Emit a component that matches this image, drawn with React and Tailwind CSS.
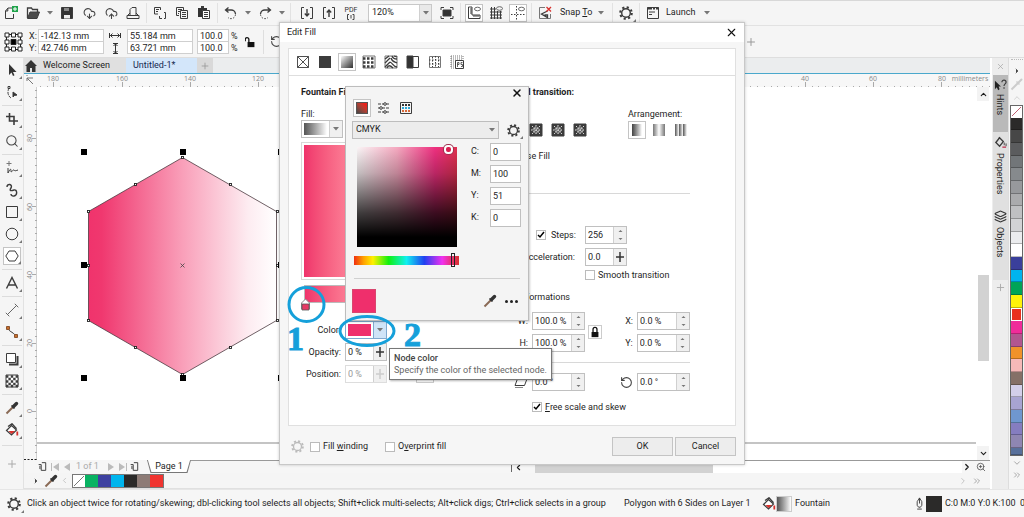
import React from 'react';
import {
  ChevronDown, ChevronLeft, ChevronRight, ChevronUp, ChevronsRight,
  CloudDownload, CloudUpload, Layers, Plus, RotateCcw, Search, X, ZoomIn,
} from 'lucide-react';
import clsx from 'clsx';

const PALETTE = [
  '#2b2a29', '#474747', '#5b5c5e', '#727679', '#868a8d', '#97999c', '#aaabad', '#bfc0c2',
  '#d2d3d5', '#ebecee', '#ffffff', '#3a3f9b', '#00b4ee', '#00a457', '#fff20a', '#e9301f',
  '#f02c9a', '#b2568f', '#f0922a', '#f6b9b8', '#857067', '#d3cfea', '#a8a4d2', '#6f97cf',
  '#857dc0', '#8f86b2', '#58709b',
];

const DOC_PALETTE = ['#08b262', '#3d41a0', '#00b5ee', '#2b2a29', '#8d7b76', '#f03430'];

const Svg = ({ size = 14, className, children }) => (
  <svg width={size} height={size} viewBox="0 0 14 14" fill="none" stroke="#3c3c3c" className={clsx('shrink-0', className)} aria-hidden="true">
    {children}
  </svg>
);

const Caret = ({ className }) => (
  <svg width="6" height="4" viewBox="0 0 6 4" className={clsx('shrink-0', className)} aria-hidden="true">
    <path d="M0 0h6L3 3.5z" fill="#777" />
  </svg>
);

const Gear = ({ size = 14, color = '#3a3a3a' }) => (
  <svg width={size} height={size} viewBox="0 0 14 14" fill="none" stroke={color} className="shrink-0" aria-hidden="true">
    <circle cx="7" cy="7" r="4.3" strokeWidth="1.4" />
    <circle cx="7" cy="7" r="5.8" strokeWidth="2" strokeDasharray="2.2 2.35" />
  </svg>
);

const FillBucket = () => (
  <Svg>
    <path d="M1.5 7.5 6.5 2.5l5 4.5-5 5z" fill="#fff" strokeWidth="1.2" />
    <path d="M3 3.5 7 .8l4.5 5" strokeWidth="1.4" />
    <path d="M3.5 8h6.5L6.5 11z" fill="#d8302c" stroke="none" />
    <path d="M12.3 8.5v4" stroke="#d8302c" strokeWidth="1.8" />
  </Svg>
);

const Dropper = ({ light }) => (
  <Svg>
    <path d="M1.5 12.5 8 6" stroke={light ? '#ccc' : '#8a6a55'} strokeWidth="2" />
    <path d="M6.5 4.5l3 3" stroke={light ? '#ccc' : '#333'} strokeWidth="1.5" />
    <path d="M8.5 5.5 11.5 2.5" stroke={light ? '#ccc' : '#333'} strokeWidth={light ? 2 : 3.4} strokeLinecap="round" />
  </Svg>
);

const Lock = ({ open }) => (
  <Svg size={12}>
    <path d="M3 7h8v6H3z" fill="#111" stroke="none" />
    <path d={open ? 'M4.5 7V3.5a2.2 2.2 0 0 0-4.2 0V6' : 'M4.7 7V4a2.3 2.3 0 0 1 4.6 0v3'} stroke="#111" strokeWidth="1.5" />
  </Svg>
);

const Origin = () => (
  <svg width="19" height="20" viewBox="0 0 19 20" fill="none" stroke="#222" className="shrink-0" aria-hidden="true">
    <path d="M2.5 2.5h14v15h-14z" />
    <path d="M1 1h4v4H1zM7.500 1h4v4h-4zM14 1h4v4h-4zM1 8h4v4H1zM14 8h4v4h-4zM1 15h4v4H1zM7.500 15h4v4h-4zM14 15h4v4h-4z" fill="#fff" />
    <path d="M7 7.500h5v5H7z" fill="#000" />
  </svg>
);

const Tool = ({ label, active, corner, children }) => (
  <button
    type="button"
    aria-label={label}
    className={clsx('relative flex h-[18px] w-[18px] shrink-0 items-center justify-center', active && 'border border-[#c4c4c4] bg-white')}
  >
    {children}
    {corner && (
      <svg width="3" height="3" viewBox="0 0 3 3" className="absolute -right-px bottom-0" aria-hidden="true">
        <path d="M3 0v3H0z" fill="#777" />
      </svg>
    )}
  </button>
);

const BarSlot = ({ children }) => <div className="flex w-[22px] shrink-0 justify-center">{children}</div>;
const BarCaret = () => (
  <button type="button" aria-label="More" className="flex w-3 shrink-0 justify-center"><Caret /></button>
);
const BarSep = () => <div className="mx-0.5 h-5 w-px shrink-0 bg-[#e2e2e2]" />;

const Toolbar = () => (
  <header className="flex h-[26px] items-center overflow-hidden border-y border-t-[#d8d8d8] border-b-[#e2e2e2] bg-[#f5f5f5]">
    <BarSlot>
      <Tool label="New">
        <Svg><path d="M8 2H4L1.500 5v7.500h8V8" /><path d="M3.800 2v3H1.500" /><path d="M8 0h6v6H8z" fill="#1fa34a" stroke="none" /><path d="M11 1v4M9 3h4" stroke="#fff" /></Svg>
      </Tool>
    </BarSlot>
    <BarSlot>
      <Tool label="Open">
        <Svg><path d="M1.500 12V2h4l1 1.500h5V6" strokeWidth="1.300" /><path d="M1.500 12.500 4 6h9.500l-2.500 6.500z" fill="#4a4a4a" /></Svg>
      </Tool>
    </BarSlot>
    <BarCaret />
    <BarSlot>
      <Tool label="Save">
        <Svg><path d="M1.500 1.500h11v11h-11z" fill="#333" /><path d="M4 9h6v3.500H4z" fill="#eee" stroke="none" /><path d="M4 2h5v3H4z" fill="#888" stroke="none" /></Svg>
      </Tool>
    </BarSlot>
    <BarSlot><Tool label="Open from cloud"><CloudDownload size={13} color="#444" /></Tool></BarSlot>
    <BarSlot><Tool label="Save to cloud"><CloudUpload size={13} color="#444" /></Tool></BarSlot>
    <BarSlot>
      <Tool label="Print">
        <Svg><path d="M1 9.500h12v3H1zM2 9l2-2M12 9l-2-2M4 9V3.500L6 1.500h4V9" /></Svg>
      </Tool>
    </BarSlot>
    <BarSep />
    <BarSlot><Tool label="Cut"><Svg><path d="M5 8H1.500V1.500h6V4M3 3.500h3M3 5.500h2M9 12.500H6.500V10M11 6.500h1.500v6H11" /></Svg></Tool></BarSlot>
    <BarSlot><Tool label="Copy"><Svg><path d="M4 9.500H1.500v-8h7V4M3 3.500h4M3 5.500h2M3 7.500h1" /><path d="M5.500 4.500h7v8h-7zM7 6.500h4M7 8.500h4M7 10.500h4" /></Svg></Tool></BarSlot>
    <BarSlot><Tool label="Paste"><Svg><path d="M1 2h9v9H1z" fill="#333" stroke="none" /><path d="M4 1h3" strokeWidth="2" /><path d="M5.500 4.500h7v8h-7zM7 6.500h4M7 8.500h4M7 10.500h4" fill="#fff" /></Svg></Tool></BarSlot>
    <BarSep />
    <BarSlot><Tool label="Undo"><Svg><path d="M4.500 1.500 1.500 4l3 2.500M2 4h5a4.300 4.300 0 0 1 4.500 4" strokeWidth="1.300" /><path d="M11.500 8.500A4.500 4.500 0 0 1 4 11.500" strokeDasharray="1.500 1.500" /></Svg></Tool></BarSlot>
    <BarCaret />
    <BarSlot><Tool label="Redo"><Svg><path d="M9.500 1.500l3 2.500-3 2.500M12 4H7a4.300 4.300 0 0 0-4.500 4" strokeWidth="1.300" /><path d="M2.500 8.500A4.500 4.500 0 0 0 10 11.500" strokeDasharray="1.500 1.500" /></Svg></Tool></BarSlot>
    <BarCaret />
    <BarSep />
    <div className="w-[3px]" />
    <BarSlot><Tool label="Import"><Svg><path d="M4 1.500H1.500v11H4M10 1.500h2.500v11H10" /><path d="M7 3v7M4.800 7.500 7 10l2.200-2.500" strokeWidth="1.400" /></Svg></Tool></BarSlot>
    <BarSlot><Tool label="Export"><Svg><path d="M4 1.500H1.500v11H4M10 1.500h2.500v11H10" /><path d="M7 11V4M4.800 6.500 7 4l2.200 2.500" strokeWidth="1.400" /></Svg></Tool></BarSlot>
    <BarSlot>
      <button type="button" className="flex flex-col items-center text-[7px] leading-[7px] text-[#333]">
        PDF
        <svg width="8" height="6" viewBox="0 0 8 6" fill="none" stroke="#444" aria-hidden="true"><path d="M2 .5H.5v5H2M5.500 .5H7v5H5.500M4 1v3.500" /></svg>
      </button>
    </BarSlot>
    <div className="relative ml-1.5 shrink-0">
      <select aria-label="Zoom level" defaultValue="120%" className="h-[18px] w-[64px] appearance-none border border-[#c8c8c8] bg-white pl-[3px]">
        <option>120%</option>
      </select>
      <span className="pointer-events-none absolute inset-y-px right-px flex w-3 items-center justify-center border-l border-[#d0d0d0] bg-[#e9e9e9]"><Caret /></span>
    </div>
    <div className="w-1" />
    <BarSlot><Tool label="Full screen preview"><Svg><path d="M3 4h8v6H3z" fill="#333" /><path d="M1 4V1.500h3M10 1.500h3V4M1 10v2.500h3M10 12.500h3V10" /></Svg></Tool></BarSlot>
    <BarSep />
    <BarSlot><Tool label="Show rulers" active><Svg><path d="M1.500 1v11.500H13V9H5V1zM3 3h2M3 5h2M3 7h2M7 11V9M9 11V9M11 11V9" /><ellipse cx="10.500" cy="3" rx="3" ry="1.800" stroke="#666" /></Svg></Tool></BarSlot>
    <BarSlot><Tool label="Show grid"><Svg><path d="M2.500 1v12M5.500 1v12M8.500 5v8M11.500 5v8M1 3h6M1 6h12M1 9h12M1 12h12" /><ellipse cx="10.500" cy="2.500" rx="3" ry="1.800" stroke="#666" /></Svg></Tool></BarSlot>
    <BarSlot><Tool label="Show guidelines" active><Svg><path d="M5.500 0v14M0 8.500h14" strokeDasharray="1.500 1.500" /><ellipse cx="10.500" cy="3" rx="3" ry="1.800" stroke="#666" /></Svg></Tool></BarSlot>
    <BarSep />
    <BarSlot><Tool label="Snap off"><Svg><path d="M7 1.500H1.500v11h11V8" stroke="#777" /><path d="M9.500 5 3.500 8l6 3.500V9H6.500" strokeWidth="1.300" /><path d="M8.500 1l4.500 4.500M13 1 8.500 5.500" stroke="#d8302c" strokeWidth="1.300" /></Svg></Tool></BarSlot>
    <button type="button" className="ml-1 flex w-11 shrink-0 items-center justify-between whitespace-nowrap">
      <span>Snap <u>T</u>o</span><Caret />
    </button>
    <div className="w-1.5" />
    <BarSep />
    <BarSlot><Tool label="Options" corner><Gear /></Tool></BarSlot>
    <BarSep />
    <BarSlot><Tool label="Launcher"><Svg><path d="M1.500 1.500h11v11h-11z" /><path d="M1 2.500h12" strokeWidth="2" strokeDasharray="5 1 2 1" /><path d="M3 6h6M3 8.500h3" /></Svg></Tool></BarSlot>
    <button type="button" className="ml-0.5 flex w-11 shrink-0 items-center justify-between"><span>Launch</span><Caret /></button>
  </header>
);

const StackedInputs = ({ labels, values, width }) => (
  <div className="flex shrink-0 flex-col">
    {values.map((value, i) => (
      <input key={labels[i]} aria-label={labels[i]} defaultValue={value} className={clsx('h-[13px] border border-[#cfcfcf] bg-white px-0.5 leading-[11px]', width, i > 0 && '-mt-px')} />
    ))}
  </div>
);

const PropertyBar = () => (
  <div className="flex h-8 items-center border-b border-[#dedede] bg-[#f5f5f5] pl-1">
    <Origin />
    <div className="mr-0.5 ml-1.5 flex w-[7px] flex-col leading-3"><span>X:</span><span>Y:</span></div>
    <StackedInputs labels={['X position', 'Y position']} values={['-142.13 mm', '42.746 mm']} width="w-[66px]" />
    <svg width="12" height="26" viewBox="0 0 12 26" fill="none" stroke="#333" className="mx-[5px] shrink-0" aria-hidden="true">
      <path d="M.5 4v5M11.500 4v5M1 6.500h10M3.500 4.500l-2 2 2 2M8.500 4.500l2 2-2 2M4 14.500h5M4 24.500h5M6.500 15v9M4.500 17l2-2 2 2M4.500 22l2 2 2-2" />
    </svg>
    <div className="ml-px"><StackedInputs labels={['Width', 'Height']} values={['55.184 mm', '63.721 mm']} width="w-[66px]" /></div>
    <div className="mr-0.5 ml-1"><StackedInputs labels={['Scale X', 'Scale Y']} values={['100.0', '100.0']} width="w-8" /></div>
    <div className="flex w-2 flex-col leading-3"><span>%</span><span>%</span></div>
    <button type="button" aria-label="Lock ratio" className="mx-1.5"><Lock open /></button>
    <div className="mr-1.5 h-6 w-px bg-[#dedede]" />
    <RotateCcw size={13} color="#444" />
    <button type="button" aria-label="Add control" className="ml-[462px]"><Plus size={12} color="#999" /></button>
  </div>
);

const Toolbox = () => {
  const groups = [
    [
      ['Pick', <Svg><path d="M4 1v11l2.500-2.500L8 13l1.500-.8L8 9h3.500z" fill="#333" stroke="none" /></Svg>],
      ['Shape', <Svg><path d="M4 3C2 7 3 11 6 13" strokeDasharray="3 1" /><path d="M3 1.500h2v2H3z" /><path d="M8 7v5l1.500-1.500L12 10z" fill="#333" /></Svg>],
    ],
    [
      ['Crop', <Svg><path d="M4.500 1v8h8.500M1 4.500h8V13" strokeWidth="1.600" /></Svg>],
      ['Zoom', <Search size={14} strokeWidth={1.8} color="#444" />],
    ],
    [
      ['Freehand', <Svg><path d="M4 0v5M1.500 2.500h5" stroke="#777" /><path d="M3 7v5c2-4 3-5 3-2s2-2 3-1 1 1 4 0" /></Svg>],
      ['Artistic media', <Svg><path d="M2 4c0-4 6-3 4 1-2 3 0 3 3 2s4 5 0 6c-2 .5-3-1-3-2" strokeWidth="1.400" /></Svg>],
      ['Rectangle', <Svg><path d="M1.500 1.500h11v11h-11z" /></Svg>],
      ['Ellipse', <Svg><circle cx="7" cy="7" r="5.800" /></Svg>],
      ['Polygon', <Svg><path d="M4 2h6l3.200 5L10 12H4L.8 7z" /></Svg>, true],
    ],
    [['Text', <Svg><path d="M1.500 12.500 7 1.500l5.500 11M3.500 9h7" strokeWidth="1.400" /></Svg>]],
    [
      ['Dimension', <Svg><path d="M2.500 11.500l9-9M.8 9.800l3.500 3.500M9.800 .8l3.500 3.500" stroke="#666" /></Svg>],
      ['Connector', <Svg><path d="M3 3c1 4 4 3 8 8" /><path d="M1.500 1.500h3v3h-3zM9.500 9.500h3v3h-3z" fill="#c9702d" stroke="#8a5430" /></Svg>],
    ],
    [
      ['Drop shadow', <Svg><path d="M4 12.500h8.500V4" strokeWidth="2" /><path d="M1.500 1.500h9v9h-9z" fill="#fff" /></Svg>],
      ['Transparency', <Svg><path d="M1 1h12v12H1z" fill="#fff" /><path d="M1 2.500h12M1 7.500h12M1 12h12" strokeWidth="2.400" strokeDasharray="2.400 2.400" /><path d="M3.400 5h10M3.400 10h10" strokeWidth="2.400" strokeDasharray="2.400 2.400" /></Svg>],
    ],
    [['Color eyedropper', <Dropper />], ['Interactive fill', <FillBucket />]],
  ];
  return (
    <aside className="flex w-6 shrink-0 flex-col items-center border-r border-[#e2e2e2] bg-[#f5f5f5] pt-px">
      {groups.map((group, i) => (
        <div key={i} className={clsx('flex w-5 flex-col items-center', i > 0 && 'mt-0.5 border-t border-[#dcdcdc] pt-0.5')}>
          {group.map(([label, icon, active]) => (
            <div key={label} className="flex h-[22px] items-center">
              <Tool label={label} active={active} corner>{icon}</Tool>
            </div>
          ))}
        </div>
      ))}
      <div className="mt-1 flex w-5 justify-center border-t border-[#dcdcdc] pt-3"><Plus size={12} color="#aaa" /></div>
    </aside>
  );
};

const ticks = (count, start, step) => Array.from({ length: count }, (_, i) => start + i * step);

const TopRuler = () => (
  <div className="flex h-[13px] overflow-hidden bg-[#f7f7f7]">
    <svg width="966" height="13" viewBox="0 0 966 13" fill="none" stroke="#aaa" className="shrink-0" aria-hidden="true">
      <path d="M9 10 3 4M3 7V4h3M3 1v1M6 4h3" stroke="#777" />
      {ticks(142, 15.800, 6.830).map((x, i) => <path key={i} d={`M${Math.round(x) + 0.5} ${i % 10 === 2 ? 8 : 12}v5`} />)}
      <g fill="#8a8a8a" stroke="none" fontSize="7" textAnchor="middle" fontFamily="Open Sans, sans-serif">
        {[[180, 29], [160, 98], [140, 166], [120, 234], [40, 781], [60, 849], [80, 918]].map(([n, x]) => (
          <text key={n} x={x} y="7">{n}</text>
        ))}
        <text x="946" y="7">millimeters</text>
      </g>
    </svg>
  </div>
);

const SideRuler = () => (
  <svg width="13" height="373" viewBox="0 0 13 373" fill="none" stroke="#aaa" className="shrink-0 bg-[#f7f7f7]" aria-hidden="true">
    <path d="M12.500 0v373" stroke="#d0d0d0" />
    {ticks(55, 3, 6.830).map((y, i) => <path key={i} d={`M${i % 10 === 7 ? 8 : 11} ${Math.round(y) + 0.5}h4`} />)}
    <g fill="#8a8a8a" stroke="none" fontSize="7" textAnchor="middle" fontFamily="Open Sans, sans-serif">
      {[[80, 51], [60, 120], [40, 188], [20, 256], [0, 324]].map(([n, y]) => (
        <text key={n} transform={`translate(8 ${y}) rotate(-90)`}>{n}</text>
      ))}
    </g>
    <path d="M0 372.500h13" stroke="#222" strokeDasharray="2 1.500" />
  </svg>
);

const Hexagon = () => {
  const nodes = [[145, 70], [98, 97], [51, 124], [51, 178], [51, 233], [98, 260], [145, 287], [193, 260], [240, 233], [240, 178], [240, 124], [193, 97]];
  const handles = [[46, 65], [145, 65], [243, 65], [46, 178], [243, 178], [46, 291], [145, 291], [243, 291]];
  return (
    <svg width="260" height="373" viewBox="0 0 260 373" className="shrink-0" role="img" aria-label="Polygon with 6 sides">
      <defs>
        <linearGradient id="pink">
          <stop offset="0" stopColor="#f0336c" />
          <stop offset="0.070" stopColor="#f0386f" />
          <stop offset="0.500" stopColor="#f99fb9" />
          <stop offset="0.850" stopColor="#fdecf1" />
          <stop offset="1" stopColor="#ffffff" />
        </linearGradient>
      </defs>
      <path d="M145.500 70.500 239.500 124.500V233.500L145.500 287.500 51.500 233.500V124.500z" fill="url(#pink)" stroke="#4b3a40" strokeWidth="0.800" />
      {nodes.map(([x, y]) => <rect key={`${x}-${y}`} x={x - 0.5} y={y - 0.5} width="2" height="2" fill="#fff" stroke="#222" strokeWidth="0.900" />)}
      {handles.map(([x, y]) => <rect key={`h${x}-${y}`} x={x - 2} y={y - 3} width="6" height="6" fill="#000" />)}
      <path d="M143.500 176.500l4 4M147.500 176.500l-4 4" stroke="#444" strokeWidth="0.800" />
    </svg>
  );
};

const Workspace = () => (
  <section className="flex min-w-0 flex-1 flex-col">
    <nav className="flex h-4 items-stretch border-b border-[#4aa8cc] bg-[#ebedee]">
      <a href="#welcome" className="flex w-[102px] items-center gap-1.5 bg-[#e0e0e0] pl-px text-[#222]">
        <svg width="12" height="12" viewBox="0 0 12 12" aria-hidden="true"><path d="M6 0 0 6h1.500v6H5V8h2v4h3.500V6H12z" fill="#333" /></svg>
        Welcome Screen
      </a>
      <a href="#untitled" className="flex w-[71px] items-center bg-[#d3e6fa] pl-[7px] text-[#15294f]">Untitled-1*</a>
      <button type="button" aria-label="New tab" className="flex w-4 items-center justify-center bg-[#d9d9d9]"><Plus size={10} color="#999" /></button>
    </nav>
    <TopRuler />
    <div className="flex flex-1">
      <SideRuler />
      <div className="relative min-w-0 flex-1 overflow-hidden bg-white">
        <Hexagon />
        <div className="absolute bottom-4 left-0 h-0.5 w-full bg-[#c4c4c4]" />
      </div>
      <div className="flex w-3.5 flex-col items-center bg-white">
        <button type="button" aria-label="Scroll up" className="flex h-3.5 w-3 items-center justify-center bg-[#f3f3f3]"><ChevronUp size={9} strokeWidth={3} /></button>
        <div className="mt-[174px] h-[86px] w-[11px] bg-[#d2d2d2]" />
        <button type="button" aria-label="Scroll down" className="mt-auto flex h-3.5 w-3 items-center justify-center bg-[#f3f3f3]"><ChevronDown size={9} strokeWidth={3} /></button>
      </div>
    </div>
    <div className="flex h-[13px] items-center bg-[#f6f6f6] pl-3.5">
      <Svg size={9}><path d="M1 4h4v9h7V1H6M3 6v5" strokeWidth="1.500" /></Svg>
      <svg width="25" height="8" viewBox="0 0 25 8" fill="#bbb" className="ml-1 shrink-0" aria-hidden="true"><path d="M0 0h1v8H0zM8 0v8L2 4zM19 0v8l-6-4z" /></svg>
      <span className="w-7 shrink-0 text-[#aaa]">1 of 1</span>
      <svg width="20" height="8" viewBox="0 0 20 8" fill="#bbb" className="ml-1 shrink-0" aria-hidden="true"><path d="M0 0v8l6-4zM11 0v8l6-4zM18 0h1v8h-1z" /></svg>
      <Svg size={9} className="ml-0.5"><path d="M1 4h4v9h7V1H6M3 6v5" strokeWidth="1.500" /></Svg>
      <div className="ml-2 h-[13px] w-11 shrink-0 bg-[#777] [clip-path:polygon(0_0,100%_0,92%_100%,8%_100%)]">
        <button type="button" className="block h-3 w-11 bg-white leading-3 [clip-path:polygon(2%_0,98%_0,90%_100%,10%_100%)]">Page 1</button>
      </div>
      <div className="flex min-w-0 flex-1 items-center self-stretch border-t border-[#999]">
        <div className="ml-[320px] h-2.5 w-px bg-[#666]" />
        <ChevronLeft size={9} strokeWidth={3} className="ml-0.5 shrink-0" />
        <div className="ml-3 h-3 w-[178px] shrink-0 bg-[#d2d2d2]" />
        <div className="h-3 min-w-0 flex-1 bg-white" />
        <ChevronRight size={10} strokeWidth={3} className="shrink-0" />
        <ZoomIn size={10} className="mr-1 ml-1 shrink-0" color="#555" />
      </div>
    </div>
    <div className="flex h-4 items-center border-b border-[#e0e0e0] bg-[#f5f5f5] pl-2">
      <ChevronRight size={8} fill="#444" color="#444" />
      <div className="ml-1"><Dropper /></div>
      <ChevronLeft size={9} color="#bbb" className="ml-0.5" />
      <div className="ml-[3px] flex border border-[#777] bg-white">
        <svg width="12" height="12" viewBox="0 0 12 12" stroke="#777" aria-hidden="true"><path d="M1 11 11 1" /></svg>
        {DOC_PALETTE.map((color) => (
          <button key={color} type="button" aria-label={color} className="h-3 w-[13px]" style={{ backgroundColor: color }} />
        ))}
      </div>
      <ChevronRight size={10} color="#bbb" className="ml-auto" />
      <ChevronsRight size={10} color="#999" className="mr-2 ml-1" />
    </div>
  </section>
);

const DockTab = ({ active, icon, children }) => (
  <button type="button" className={clsx('flex w-[15px] flex-col items-center px-px pt-1', active ? 'h-[57px] gap-0.5 bg-[#b9b9b9]' : 'h-[74px] gap-1 bg-[#e0e0e0]')}>
    {icon}
    <span className="leading-3 [writing-mode:vertical-rl]">{children}</span>
  </button>
);

const Dockers = () => (
  <aside className="ml-0.5 flex w-[17px] shrink-0 flex-col items-center border-r border-[#ddd] bg-[#ededed]">
    <button type="button" aria-label="Close docker" className="flex h-[17px] items-center"><X size={9} color="#aaa" /></button>
    <DockTab active icon={<Svg size={13}><path d="M1 2v9l2-2 1.500 3L6 11 5 8h2.500z" fill="#222" stroke="none" /><path d="M8.500 3.500c0-3 4.500-3 4.500 0 0 2-2.200 1.500-2.200 4M10.800 9v1.500" strokeWidth="1.300" /></Svg>}>Hints</DockTab>
    <DockTab icon={<Svg size={13}><path d="M2 7 6 2l4 4-4 5z" strokeWidth="1.500" /><path d="M9 12h4" stroke="#c0405a" strokeWidth="1.500" /><path d="M5 3l1-2M11 7v3M13 8v3" /></Svg>}>Properties</DockTab>
    <DockTab icon={<Layers size={13} color="#333" />}>Objects</DockTab>
    <Plus size={11} color="#aaa" className="mt-0.5" />
  </aside>
);

const ColorStrip = () => (
  <aside className="flex w-[15px] shrink-0 flex-col items-center bg-[#f5f5f5]">
    <div className="mt-px w-3 border-t border-dotted border-[#bbb]" />
    <ChevronRight size={8} fill="#444" color="#444" className="mt-[7px]" />
    <div className="mt-0.5"><Dropper light /></div>
    <ChevronUp size={10} color="#ccc" className="mt-0.5" />
    <div className="mt-0.5 flex h-[351px] w-[13px] flex-col border border-[#666]">
      <div className="flex flex-2 bg-white">
        <svg viewBox="0 0 11 11" width="11" height="11" stroke="#c06070" aria-hidden="true"><path d="M1 10 10 1" /></svg>
      </div>
      {PALETTE.map((color, i) => (
        <button
          key={color}
          type="button"
          aria-label={color}
          className={clsx(i === PALETTE.length - 1 ? 'flex-1' : 'flex-2', i === 15 ? 'border border-white' : 'border-b border-black/25')}
          style={{ backgroundColor: color }}
        />
      ))}
    </div>
    <ChevronDown size={10} color="#999" className="mt-0.5" />
    <ChevronsRight size={10} color="#999" className="mt-0.5" />
  </aside>
);

const StatusBar = () => (
  <footer className="flex h-7 items-center overflow-hidden border-t border-[#e6e6e6] bg-[#f6f6f6] pl-[5px] whitespace-nowrap">
    <Tool label="Status bar options" corner><Gear /></Tool>
    <p className="ml-1 w-[597px] shrink-0">
      Click an object twice for rotating/skewing; dbl-clicking tool selects all objects; Shift+click multi-selects; Alt+click digs; Ctrl+click selects in a group
    </p>
    <p className="w-[138px] shrink-0">Polygon with 6 Sides on Layer 1</p>
    <FillBucket />
    <div className="h-4 w-4 shrink-0 border border-[#ccc] bg-linear-to-r from-[#555] to-white" />
    <p className="ml-[3px]">Fountain</p>
    <Svg size={13} className="ml-auto"><path d="M7 1 4.500 5v4l1.500 2h2l1.500-2V5zM7 1v6M4.500 13h5" /></Svg>
    <div className="h-4 w-4 shrink-0 bg-[#2b2a29]" />
    <p className="ml-[3px] w-[79px] shrink-0 whitespace-pre">C:0 M:0 Y:0 K:100  0</p>
  </footer>
);

const Spin = ({ label, value, width = 'w-[53px]', slider, disabled }) => (
  <div className={clsx('flex h-[18px] shrink-0 border', width, disabled ? 'border-[#ddd]' : 'border-[#c0c0c0]')}>
    <input aria-label={label} defaultValue={value} disabled={disabled} className="w-0 min-w-0 flex-1 bg-white pl-0.5 disabled:text-[#999]" />
    <button type="button" disabled={disabled} aria-label={`Change ${label}`} className="flex w-[13px] items-center justify-center border-l border-[#d0d0d0] bg-[#f0f0f0]">
      {slider ? (
        <svg width="10" height="12" viewBox="0 0 10 12" stroke={disabled ? '#ccc' : '#333'} aria-hidden="true"><path d="M5 1v10M1 6h8" strokeWidth="1.500" /></svg>
      ) : (
        <svg width="5" height="12" viewBox="0 0 5 12" fill="#777" aria-hidden="true"><path d="M.5 3h4l-2-2zM.5 9h4l-2 2z" /></svg>
      )}
    </button>
  </div>
);

const Check = ({ checked, children }) => (
  <label className="flex items-center gap-[3px] whitespace-nowrap">
    <input
      type="checkbox"
      defaultChecked={checked}
      className="h-2.5 w-2.5 shrink-0 appearance-none border border-[#bbb] bg-white checked:bg-[url('data:image/svg+xml,%3Csvg%20xmlns=%22http://www.w3.org/2000/svg%22%20viewBox=%220%200%208%208%22%3E%3Cpath%20d=%22M1%204l2%202%204-5%22%20fill=%22none%22%20stroke=%22black%22%20stroke-width=%221.500%22/%3E%3C/svg%3E')]"
    />
    <span>{children}</span>
  </label>
);

const Pattern = ({ kind }) => {
  const paths = {
    none: <path d="M1.500 1.500h11v11h-11zM1.500 1.500l11 11M12.500 1.500l-11 11" strokeWidth="0.900" />,
    solid: <path d="M1 1h12v12H1z" fill="#3c3c3c" stroke="none" />,
    vector: <><path d="M1 1h12v12H1z" stroke="#777" /><path d="M1 3.500h12M1 7.500h12M1 11.500h12" strokeWidth="2.500" strokeDasharray="2.500 1.500" /></>,
    bitmap: <><path d="M1 1h12v12H1z" stroke="#777" /><path d="M1 4l4-3M1 8l5-5M1 12l5-5M8 1c1 3 3 3 5 3M7 3c1 4 4 4 6 5M6 7c3 1 3 5 7 5M3 13c1-3 3-3 6 0M10 1l3 1" strokeWidth="1.300" /></>,
    two: <><path d="M1.500 1.500h11v11h-11z" /><path d="M1 1h6v12H1z" fill="#333" /></>,
    texture: <><path d="M1.500 1.500h11v11h-11z" stroke="#777" /><path d="M4.500 2v10M7.500 1v12M10.500 2v10M1 5h12M1 9h12" strokeDasharray="1.500 1.500" /></>,
    postscript: <><path d="M1 1h12v4M1 1v12h4M1 3h12M1 5h11M1 7h4M1 9h4M1 11h4" stroke="#777" strokeDasharray="1 1" /><path d="M5.500 5.500h8v8h-8z" fill="#fff" /><path d="M7.500 12V7.500h1.500v2H7.500M12.500 7.500H11v2h1.500v2H11" strokeWidth="0.800" /></>,
    tile: <><path d="M1 1h12v12H1z" fill="#3c3c3c" /><path d="M3 3l8 8M11 3l-8 8M7 2v10M2 7h10" stroke="#ddd" strokeDasharray="1.500 1" /><circle cx="7" cy="7" r="3" stroke="#bbb" strokeDasharray="2 1" /></>,
  };
  return <Svg>{paths[kind]}</Svg>;
};

const CornerInput = ({ label, value }) => (
  <label className="flex items-center justify-between">
    {label}:
    <input defaultValue={value} className="h-[18px] w-[31px] border border-[#c0c0c0] bg-white pl-0.5" />
  </label>
);

const ColorPicker = () => (
  <div className="absolute top-[63px] left-[65px] flex w-[184px] flex-col border border-[#bdbdbd] bg-[#f4f4f4] px-1.5 pb-[7px] shadow-[1px_1px_2px_rgba(0,0,0,0.2)]">
    <button type="button" aria-label="Close picker" className="-mr-px flex h-3 w-3 items-center self-end"><X size={12} strokeWidth={3} color="#111" /></button>
    <div className="flex gap-1 pl-px">
      <Tool label="Visual selector" active><div className="h-3 w-3 border border-[#555] bg-linear-to-bl from-[#e8231c] from-20% to-[#444]" /></Tool>
      <Tool label="Sliders"><Svg><path d="M1 3h12M1 7h12M1 11h12" strokeDasharray="3 1" /><circle cx="8" cy="3" r="1.300" fill="#fff" /><circle cx="4" cy="7" r="1.300" fill="#fff" /><circle cx="8" cy="11" r="1.300" fill="#fff" /></Svg></Tool>
      <Tool label="Palettes">
        <Svg>
          <path d="M1.500 1.500h11v11h-11z" />
          <path d="M3 4h8" stroke="#333" strokeWidth="2" strokeDasharray="2 1" />
          <path d="M3 7h8" stroke="#29a7d8" strokeWidth="2" strokeDasharray="2 1" />
          <path d="M3 10h8" stroke="#d86a3a" strokeWidth="2" strokeDasharray="2 1" />
        </Svg>
      </Tool>
    </div>
    <div className="mt-1 flex items-center justify-between">
      <div className="relative">
        <select aria-label="Color model" defaultValue="CMYK" className="h-[18px] w-[147px] appearance-none border border-[#bdbdbd] bg-[#ececec] pl-[3px]">
          <option>CMYK</option>
        </select>
        <Caret className="pointer-events-none absolute top-[7px] right-1" />
      </div>
      <Tool label="Picker options" corner><Gear size={13} /></Tool>
    </div>
    <div className="mt-1 flex justify-between">
      <div className="relative mt-1 ml-[5px] h-[100px] w-[100px] bg-[linear-gradient(to_top,#000_10%,rgba(0,0,0,0.75)_34%,rgba(0,0,0,0.22)_74%,transparent),linear-gradient(to_right,#faf5f6,#f5a9c0_40%,#ee3080_78%,#e0304f)]">
        <span className="absolute -top-0.5 right-1 flex h-[9px] w-[9px] items-center justify-center rounded-sm border-2 border-white bg-[#d8204f] ring-1 ring-[#a03050]" />
      </div>
      <div className="mr-px flex w-[50px] flex-col gap-1">
        <CornerInput label="C" value="0" />
        <CornerInput label="M" value="100" />
        <CornerInput label="Y" value="51" />
        <CornerInput label="K" value="0" />
      </div>
    </div>
    <div className="relative mt-[9px] ml-0.5 h-[9px] w-[105px] bg-[linear-gradient(to_right,#f03010,#ffa000_9%,#fff000_18%,#10f010_33%,#10f0f0_50%,#2040f0_67%,#f030f0_84%,#e83070_93%,#d83030)]">
      <span className="absolute -top-[3px] left-[97px] h-[14px] w-1 border border-[#222]" />
    </div>
    <div className="mx-0.5 mt-[13px] border-t border-[#d0d0d0]" />
    <div className="mt-2.5 flex items-center">
      <div className="h-6 w-6 border border-[#d8476f] bg-[#ef2f6c]" />
      <div className="ml-auto"><Dropper /></div>
      <button type="button" aria-label="More options" className="mr-1 ml-2 flex gap-0.5">
        <i className="h-[3px] w-[3px] rounded-full bg-[#222]" />
        <i className="h-[3px] w-[3px] rounded-full bg-[#222]" />
        <i className="h-[3px] w-[3px] rounded-full bg-[#222]" />
      </button>
    </div>
  </div>
);

const FillColumn = () => (
  <div className="flex w-[204px] shrink-0 flex-col pl-3">
    <h2 className="font-bold">Fountain Fill</h2>
    <span className="mt-2.5">Fill:</span>
    <button type="button" aria-label="Fill picker" className="flex h-[18px] w-[42px] items-stretch border border-[#c0c0c0]">
      <span className="m-0.5 flex-1 bg-linear-to-r from-[#555] to-white" />
      <span className="flex w-[13px] items-center justify-center border-l border-[#d0d0d0] bg-[#f0f0f0]"><Caret /></span>
    </button>
    <div className="mt-1 w-[150px] border border-[#d8d8d8] p-0.5">
      <div className="h-[132px] bg-linear-to-r from-[#ef336b] to-white" />
    </div>
    <div className="mt-[5px] ml-[3px] h-[18px] w-[145px] border border-[#bbb] bg-linear-to-r from-[#ef336b] to-white" />
    <div className="mt-[18px] flex flex-col gap-1">
      <div className="flex items-center gap-1">
        <span className="w-10 text-right">Color:</span>
        <button type="button" aria-label="Node color" className="flex h-[18px] w-[42px] items-stretch border border-[#7fa9cf] bg-white">
          <span className="m-0.5 flex-1 bg-[#ef2f6c]" />
          <span className="flex w-[13px] items-center justify-center border-l border-[#7fa9cf] bg-[#cfe4f7]"><Caret /></span>
        </button>
      </div>
      <div className="flex items-center gap-1">
        <span className="w-10 text-right">Opacity:</span>
        <Spin label="Opacity" value="0 %" width="w-[42px]" slider />
      </div>
      <div className="flex items-center gap-1">
        <span className="w-10 text-right">Position:</span>
        <Spin label="Position" value="0 %" width="w-[42px]" slider disabled />
        <div className="ml-[25px] h-[18px] w-[18px] border border-[#ccc]" />
      </div>
    </div>
  </div>
);

const TransitionColumn = () => (
  <div className="flex w-[197px] shrink-0 flex-col">
    <h2 className="w-[81px] text-right font-bold whitespace-nowrap">and transition:</h2>
    <div className="mt-2.5 flex justify-between">
      <div className="mt-[13px] flex gap-1 pl-[34px]">
        <Tool label="Default"><Pattern kind="tile" /></Tool>
        <Tool label="Repeat and mirror"><Pattern kind="tile" /></Tool>
        <Tool label="Repeat"><Pattern kind="tile" /></Tool>
      </div>
      <div className="w-[62px]">
        <span>Arrangement:</span>
        <div className="mt-px flex gap-1">
          <Tool label="Linear" active><div className="h-3 w-2.5 bg-linear-to-r from-[#444] to-white" /></Tool>
          <Tool label="Mirrored"><div className="h-3 w-3 bg-linear-to-r from-[#777] via-white to-[#777]" /></Tool>
          <Tool label="Repeated"><div className="h-3 w-3 bg-[repeating-linear-gradient(to_right,#555_0,#fff_4px)]" /></Tool>
        </div>
      </div>
    </div>
    <span className="mt-[11px] w-[57px] text-right whitespace-nowrap">Reverse Fill</span>
    <div className="mt-[31px] ml-9 border-t border-[#d8d8d8]" />
    <div className="mt-8 flex items-center">
      <div className="ml-[43px] w-[49px]"><Check checked><span className="pl-0.5">Steps:</span></Check></div>
      <Spin label="Steps" value="256" width="w-[42px]" />
    </div>
    <div className="mt-1 flex items-center">
      <span className="mr-2.5 w-[82px] text-right">Acceleration:</span>
      <Spin label="Acceleration" value="0.0" width="w-[42px]" slider />
    </div>
    <div className="mt-[3px] ml-[92px]"><Check>Smooth transition</Check></div>
    <span className="mt-2.5 w-[77px] text-right">Transformations</span>
    <div className="mt-[9px] flex items-center">
      <div className="flex flex-col gap-1">
        <div className="flex items-center gap-1"><span className="w-[35px] text-right">W:</span><Spin label="Width" value="100.0 %" /></div>
        <div className="flex items-center gap-1"><span className="w-[35px] text-right">H:</span><Spin label="Height" value="100.0 %" /></div>
      </div>
      <button type="button" aria-label="Lock aspect" className="ml-[3px] flex h-3.5 w-3.5 items-center justify-center border border-[#ccc]"><Lock /></button>
      <div className="ml-auto flex flex-col gap-1">
        <div className="flex items-center gap-1"><span>X:</span><Spin label="Offset X" value="0.0 %" /></div>
        <div className="flex items-center gap-1"><span>Y:</span><Spin label="Offset Y" value="0.0 %" /></div>
      </div>
    </div>
    <div className="mt-2.5 ml-9 border-t border-[#d8d8d8]" />
    <div className="mt-2.5 flex items-center justify-end gap-1">
      <Svg><path d="M4 2.500h9.500l-3 8H1z" /><path d="M1 12.500h8" stroke="#888" /></Svg>
      <Spin label="Skew" value="0.0 °" />
      <RotateCcw size={13} color="#444" className="ml-[31px] shrink-0" />
      <Spin label="Rotate" value="0.0 °" />
    </div>
    <div className="mt-2.5 ml-[39px]"><Check checked><u>F</u>ree scale and skew</Check></div>
  </div>
);

const Annotations = () => (
  <>
    <svg width="180" height="80" viewBox="0 0 180 80" className="pointer-events-none absolute top-[260px] left-0" fill="none" aria-hidden="true">
      <path d="M21.500 26v-6l4-4 4 4v6z" fill="#fff" stroke="#888" />
      <path d="M22 21h7v6h-7z" fill="#e63a64" stroke="#555" strokeWidth="0.800" />
      <ellipse cx="26.500" cy="21.500" rx="17.500" ry="17" stroke="#15a0da" strokeWidth="3" />
      <ellipse cx="87" cy="48" rx="27" ry="14.500" stroke="#15a0da" strokeWidth="3" />
    </svg>
    <span className="pointer-events-none absolute top-[300px] left-[7px] font-['Liberation_Serif',serif] text-[34px] leading-8 font-bold text-[#15a0da] [-webkit-text-stroke:1px_#15a0da]">1</span>
    <span className="pointer-events-none absolute top-[296px] left-[124px] font-['Liberation_Serif',serif] text-[34px] leading-8 font-bold text-[#15a0da] [-webkit-text-stroke:1px_#15a0da]">2</span>
  </>
);

const EditFillDialog = () => (
  <div role="dialog" aria-label="Edit Fill" className="absolute top-[22px] left-[279px] w-[466px] border border-[#c8c8c8] bg-white shadow-[0_0_3px_rgba(0,0,0,0.2)]">
    <div className="flex h-[19px] items-center justify-between pr-1.5 pl-[7px]">
      <h1>Edit Fill</h1>
      <button type="button" aria-label="Close" className="flex"><X size={13} color="#111" /></button>
    </div>
    <div className="bg-[#f6f6f6] px-2 pt-1.5 pb-2">
      <div className="border border-[#e0e0e0] bg-white">
        <div className="flex h-[27px] items-center gap-1 border-b border-[#dedede] pl-[5px]">
          <Tool label="No fill"><Pattern kind="none" /></Tool>
          <Tool label="Uniform fill"><Pattern kind="solid" /></Tool>
          <Tool label="Fountain fill" active><div className="h-3 w-3 bg-linear-to-tl from-[#333] to-white" /></Tool>
          <Tool label="Vector pattern fill"><Pattern kind="vector" /></Tool>
          <Tool label="Bitmap pattern fill"><Pattern kind="bitmap" /></Tool>
          <Tool label="Two-color pattern fill"><Pattern kind="two" /></Tool>
          <Tool label="Texture fill"><Pattern kind="texture" /></Tool>
          <Tool label="PostScript fill"><Pattern kind="postscript" /></Tool>
        </div>
        <div className="flex pt-2.5 pb-3 leading-3">
          <FillColumn />
          <TransitionColumn />
        </div>
      </div>
      <div className="mt-[11px] flex items-center">
        <button type="button" aria-label="Settings" className="mr-1.5 ml-[3px] flex"><Gear size={13} color="#bbb" /></button>
        <div className="w-[75px]"><Check>Fill <u>w</u>inding</Check></div>
        <Check>O<u>v</u>erprint fill</Check>
        <button type="button" className="ml-auto h-[19px] w-[61px] border border-[#c4c4c4] bg-[#ededed]">OK</button>
        <button type="button" className="ml-0.5 h-[19px] w-[61px] border border-[#c4c4c4] bg-[#ededed]">Cancel</button>
      </div>
    </div>
    <ColorPicker />
    <div role="tooltip" className="absolute top-[325px] left-[109px] w-[163px] border border-[#777] bg-white px-1 py-[3px] leading-3 whitespace-nowrap text-[#666] shadow-[1px_1px_2px_rgba(0,0,0,0.3)]">
      <p className="font-medium text-[#444]">Node color</p>
      <p>Specify the color of the selected node.</p>
    </div>
    <Annotations />
  </div>
);

export default function App() {
  return (
    <main className="relative flex min-h-screen w-full flex-col overflow-hidden bg-white font-[Roboto,sans-serif] text-[9px] text-[#1e1e1e]">
      <Toolbar />
      <PropertyBar />
      <div className="flex flex-1">
        <Toolbox />
        <Workspace />
        <Dockers />
        <ColorStrip />
      </div>
      <StatusBar />
      <EditFillDialog />
    </main>
  );
}
